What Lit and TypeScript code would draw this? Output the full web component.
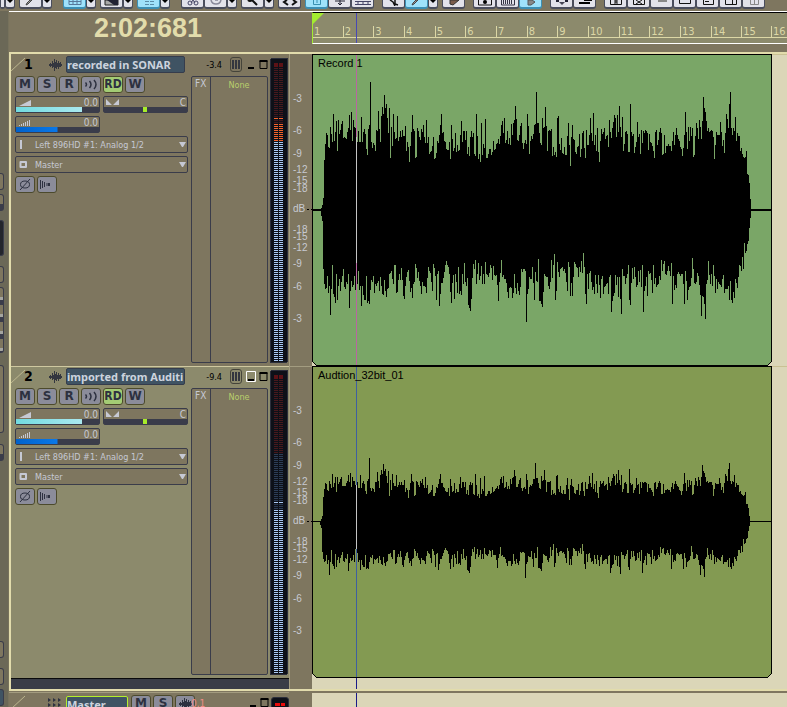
import { LitElement, html, css, svg, nothing } from "lit";
import { customElement, property } from "lit/decorators.js";

// Envelope of the recording, one value per pixel column; 405 is silence.
const SILENCE = 405;
const FIRST = 9;
const UPPER = `400 390 368 255 207 174 180 215 218 157 177 200 117 198 171 138 227 135 177 165 147 138 190 187 190 191 172 159 121 166 112 197 135 157 159 181 200 168 200 200 126 200 170 162 177 222 240 162 150 21 200 218 203 209 228 165 168 108 162 200 123 96 117 60 99 87 129 174 99 250 156 213 117 171 191 189 123 198 186 168 186 165 182 182 153 228 201 216 261 213 170 120 162 167 248 246 159 167 185 195 162 172 150 186 204 135 203 186 236 231 228 213 186 251 249 234 198 204 180 150 117 174 171 198 201 222 225 225 200 252 150 192 228 219 174 231 210 228 225 180 138 201 168 168 195 168 237 216 243 186 168 186 174 237 243 117 182 252 237 261 143 240 207 219 132 249 248 237 222 222 240 231 198 225 222 207 204 192 207 182 150 138 174 129 204 195 168 207 189 210 147 180 144 135 93 132 195 198 180 153 144 204 222 204 195 207 117 153 237 198 183 192 177 150 147 51 144 143 174 204
210 129 159 156 96 153 228 168 165 168 162 243 216 240 231 246 129 123 207 225 189 234 237 216 240 240 183 144 210 272 186 150 192 195 231 237 216 213 177 246 222 174 168 219 248 165 210 210 180 129 174 198 114 210 180 228 159 231 261 198 162 177 171 159 192 183 180 216 135 171 189 159 141 120 129 186 120 171 93 156 186 126 228 207 171 168 177 231 231 87 171 183 177 234 216 201 141 186 177 237 165 204 168 174 165 168 174 225 177 201 204 213 228 248 171 165 210 195 171 159 174 240 237 180 234 213 213 207 213 213 228 198 171 210 180 159 180 192 198 216 222 243 219 180 111 171 222 156 198 156 183 159 246 240 183 144 159 192 135 156 192 138 66 99 111 138 168 159 171 168 165 168 186 251 210 171 180 180 180 141 171 213 195 234 174 117 132 159 87 51 159 180 159 168 126 198 174 183 183 228 219 237 246 249 246 228 297 300 324 372 399`;
const LOWER = `423 438 582 627 642 639 603 654 633 720 642 570 657 666 684 597 675 633 612 648 621 603 582 636 642 621 627 597 699 648 618 636 630 603 645 564 627 588 645 633 693 633 661 675 675 603 684 678 687 645 615 621 603 654 627 633 624 618 648 606 633 657 660 615 648 666 642 639 597 594 588 612 627 570 570 654 651 615 597 615 579 615 663 672 633 606 591 585 618 651 639 669 627 621 567 579 609 591 618 633 657 621 633 633 636 654 609 576 588 594 621 648 567 579 603 675 597 588 693 657 624 624 609 591 570 558 570 576 597 651 684 624 600 672 597 621 654 576 657 648 660 597 627 564 621 633 609 690 699 708 672 609 567 582 555 627 597 564 615 603 573 627 597 627 561 597 600 606 594 570 579 615 573 600 603 600 630 678 621 594 555 606 600 612 612 624 651 669 639 636 639 669 654 597 639 657 624 648 660 636 582 591 582 582 588 741 657 642 606 612 612 576 624 675 591 618 621 552 678
678 687 696 651 597 603 606 606 633 642 621 555 609 570 537 675 648 561 591 606 582 579 576 588 582 594 621 648 561 576 663 624 663 606 561 567 576 579 606 576 591 558 594 534 576 657 687 597 642 594 588 621 645 636 657 600 627 654 600 630 669 612 603 657 636 633 627 624 657 606 600 711 678 663 654 600 630 606 666 606 672 717 582 603 603 627 609 597 570 675 690 624 579 612 576 606 636 630 588 621 585 636 570 711 648 633 606 663 588 597 594 615 654 570 627 609 636 630 627 603 615 555 588 567 558 597 600 588 573 588 603 564 687 603 645 630 639 597 591 597 603 597 597 627 687 588 618 675 645 636 633 609 549 582 624 627 621 594 603 630 660 723 663 666 687 732 627 615 558 600 627 597 633 570 603 654 612 642 621 627 630 636 612 600 654 642 642 642 633 675 618 675 684 651 669 612 624 639 606 570 573 588 546 582 504 534 528 507 498 459 429`;
const nums = (s: string) => s.trim().split(/\s+/).map(Number);
const upper = nums(UPPER).map((v) => SILENCE - v);
const lower = nums(LOWER).map((v) => v - SILENCE);

const MID = 156;
const PLAYHEAD = 44;

function wavePath(level: number, shift: number): string {
  let d = `M${FIRST + shift} ${MID}`;
  const n = Math.min(upper.length, lower.length);
  for (let i = 0; i < n; i++) d += `V${MID - Math.round((upper[i] * level) / 3)}h1`;
  d += `V${MID}`;
  for (let i = n - 1; i >= 0; i--) d += `V${MID + Math.round((lower[i] * level) / 3)}h-1`;
  return d + "Z";
}

interface Track {
  id: number; name: string; peak: string; clip: string; level: number; shift: number;
  selected: boolean; fill: string; cursor: string;
  // meter runs from top to bottom: [css class, first y, last y]
  meter: [string, number, number][];
}

const TRACKS: Track[] = [
  { id: 1, name: "recorded in SONAR", peak: "-3.4", clip: "Record 1", level: 1, shift: 0, selected: false,
    fill: "#7aa667", cursor: "#b966a2",
    meter: [["dimred", 10, 60], ["hot", 60, 61], ["dimred", 62, 66], ["hot", 66, 84], ["on", 84, 303]] },
  { id: 2, name: "imported from Auditi", peak: "-9.4", clip: "Audtion_32bit_01", level: 0.5, shift: -1, selected: true,
    fill: "#839a52", cursor: "#3f5fa0",
    meter: [["dimred", 10, 84], ["dim", 84, 132], ["on", 132, 133], ["dim", 134, 140], ["on", 140, 303]] },
];

const SCALE: [string, number][] = [
  ["-3", 44], ["-6", 76], ["-9", 99], ["-12", 115], ["-15", 126], ["-18", 134], ["dB", 154],
  ["-18", 175], ["-15", 182], ["-12", 193], ["-9", 209], ["-6", 232], ["-3", 264],
];

const waveIcon = svg`<path d="M.5 5v2M1.500 4v4M2.500 5v2M3.500 2v7M4.500 4v4M5.500 0v12M6.500 3v6M7.500 1v9M8.500 4v4M9.500 2v8M10.500 4v4M11.500 3v5M12.500 5v2" stroke="currentColor" fill="none" shape-rendering="crispEdges"/>`;

const controls = css`
  :host { font-family: "DejaVu Sans Condensed", "DejaVu Sans", sans-serif; font-size: 9px; color: #c6c9d4; }
  * { box-sizing: border-box; }
  svg { display: block; flex: none; }
  button, input, select { font: inherit; color: inherit; margin: 0; padding: 0; border: 0; background: none; border-radius: 0; outline: none; }
  .key {
    width: 20px; height: 17px; border: 1px solid #4c4a2c; border-radius: 3px; background: #8b8c9a;
    color: #2d3140; font: bold 12px/15px "DejaVu Sans", sans-serif; text-align: center;
    display: flex; align-items: center; justify-content: center;
  }
  .key.on { background: #a3cc74; font-family: "DejaVu Sans Condensed", sans-serif; }
  .slash { width: 14px; height: 14px; align-self: flex-start; color: #bdb78f; }
  .name {
    height: 17px; border: 1px solid #353c4c; border-radius: 2px; background: #3f5363; color: #ccd3de;
    font: bold 11px/15px "Noto Sans", sans-serif; min-width: 0;
  }
  .winbtn { height: 14px; color: #000; display: flex; align-items: center; }
`;

@customElement("track-header")
class TrackHeader extends LitElement {
  @property({ attribute: false }) track!: Track;

  static styles = [controls, css`
    :host { display: flex; background: #7e765f; min-width: 0; }
    :host([selected]) { background: #8c8a6c; box-shadow: inset 0 1px #cfc8a0; }
    .left { width: 180px; display: flex; flex-direction: column; }
    .right { width: 78px; display: flex; flex-direction: column; padding-bottom: 4px; }
    .title { height: 21px; margin-bottom: 1px; display: flex; align-items: center; }
    .title .slash { margin-top: 3px; }
    .num { width: 24px; color: #000; font: bold 14px/17px "DejaVu Sans Condensed", sans-serif; margin-left: -1px; }
    .wave { color: #33363f; margin: 0 4px 0 1px; }
    .name { width: 119px; }
    .stack { padding-left: 4px; display: flex; flex-direction: column; gap: 3px; }
    .row { display: flex; gap: 2px; }
    .slider { width: 85px; height: 17px; border: 1px solid #3a3c4a; border-radius: 2px; background: #7e765f; margin-right: 1px; }
    .read { display: flex; justify-content: space-between; height: 10px; font-size: 10px; line-height: 11px; padding: 0 1px 0 2px; }
    .slider input { -webkit-appearance: none; appearance: none; display: block; width: 100%; height: 5px; background: #3a3c4a; }
    .slider .gain { background: linear-gradient(90deg, #72dbe0, #aae9ef) 0 0 / 80% 100% no-repeat #3a3c4a; }
    .slider .trim { background: linear-gradient(90deg, #0062cc, #0a78e8) 0 0 / 50% 100% no-repeat #3a3c4a; }
    .slider input::-webkit-slider-thumb { -webkit-appearance: none; width: 4px; height: 5px; background: transparent; }
    .slider .pan::-webkit-slider-thumb { background: #a8ec2a; }
    .pick { width: 173px; height: 17px; border: 1px solid #3a3c4a; border-radius: 2px; background: #7e765f; display: flex; align-items: center; }
    .pick select { -webkit-appearance: none; appearance: none; flex: 1; min-width: 0; height: 15px; }
    .pick .down { margin-right: 1px; }
    .peak { width: 43px; color: #000; text-align: right; padding-right: 8px; }
    .info { display: flex; height: 21px; margin-bottom: 1px; align-items: center; margin-left: -4px; }
    .bars { width: 12px; height: 15px; border: 1px solid #45443a; border-radius: 3px; display: flex; align-items: center; justify-content: center; color: #33363f; }
    .winbtn.min { width: 10px; justify-content: center; margin-left: 4px; }
    .winbtn.max { width: 10px; justify-content: center; margin-left: 2px; }
    .fx { flex: 1; border: 1px solid #3a3c4a; border-radius: 2px; background: #7e765f; display: grid; grid-template-columns: 19px 1fr; width: 77px; }
    .fx .lab { border-right: 1px solid #3a3c4a; padding: 0 0 0 3px; font-size: 10px; line-height: 13px; }
    .fx .none { color: #b9ce6c; text-align: center; line-height: 16px; }
    .meter { margin: 4px 1px; }
    .meter path { fill: none; stroke-width: 4; stroke-dasharray: 1 1; }
    .dimred { stroke: #46191d; } .hot { stroke: #f4622c; } .dim { stroke: #2c3c55; } .on { stroke: #a9c9f5; }
  `];

  private slider(kind: string, icon: unknown, text: string, value: number) {
    return html`<div class="slider">
      <div class="read"><svg width="14" height="10" viewBox="0 0 14 10">${icon}</svg><span>${text}</span></div>
      <input class=${kind} type="range" min="0" max="100" .value=${String(value)} aria-label=${kind} />
    </div>`;
  }

  private pick(icon: unknown, text: string, label: string) {
    return html`<label class="pick"><svg width="19" height="15" viewBox="0 0 19 15">${icon}</svg>
      <select aria-label=${label}><option>${text}</option></select>
      <svg class="down" width="7" height="7" viewBox="0 0 7 7"><path d="M0 1h7L4 6H3z" fill="#c6c9d4"/></svg></label>`;
  }

  render() {
    const t = this.track;
    return html`
      <div class="left">
        <div class="title">
          <svg class="slash" viewBox="0 0 14 14"><path d="M0 14L14 1" stroke="currentColor"/></svg>
          <span class="num">${t.id}</span>
          <svg class="wave" width="13" height="12" viewBox="0 0 13 12">${waveIcon}</svg>
          <input class="name" aria-label="Track name" .value=${t.name} />
        </div>
        <div class="stack">
          <div class="row">
            <button class="key">M</button><button class="key">S</button><button class="key">R</button>
            <button class="key" aria-label="Input echo"><svg width="14" height="11" viewBox="0 0 14 11"><path d="M1.500 3.500q2 2 0 4M5.500 2q3 3.500 0 7M10 1q4 4.500 0 9" fill="none" stroke="currentColor" stroke-width="1.500"/></svg></button>
            <button class="key on">RD</button><button class="key">W</button>
          </div>
          <div class="row">
            ${this.slider("gain", svg`<path d="M1 9L13 3v6z" fill="#c6c9d4"/>`, "0.0", 80)}
            ${this.slider("pan", svg`<path d="M0 2v6h6zM13 2v6H7z" fill="#c6c9d4"/>`, "C", 49)}
          </div>
          <div class="row">
            ${this.slider("trim", svg`<path d="M1.500 9V8M3.500 9V7M5.500 9V6M7.500 9V5M9.500 9V4M11.500 9V3" stroke="#c6c9d4"/>`, "0.0", 50)}
          </div>
          ${this.pick(svg`<path d="M4 3h2v9H4z" fill="#c6c9d4"/>`, "Left 896HD #1: Analog 1/2", "Input")}
          ${this.pick(svg`<path d="M4.500 5h5.500v5H4.500z" fill="none" stroke="#c6c9d4" stroke-width="2" stroke-linejoin="round"/>`, "Master", "Output")}
          <div class="row">
            <button class="key" aria-label="Phase"><svg width="14" height="13" viewBox="0 0 14 13"><ellipse cx="7" cy="6.500" rx="4.500" ry="3.500" fill="none" stroke="currentColor"/><path d="M2 12L12 1" stroke="currentColor"/></svg></button>
            <button class="key" aria-label="Interleave"><svg width="16" height="13" viewBox="0 0 16 13"><path d="M1.500 2v9M3.500 3v7M5.500 4v5M8 5v3" stroke="currentColor"/><path d="M9 5h2v3H9z" fill="currentColor"/></svg></button>
          </div>
        </div>
      </div>
      <div class="right">
        <div class="info">
          <span class="peak">${t.peak}</span>
          <button class="bars" aria-label="Meters"><svg width="8" height="9" viewBox="0 0 8 9"><path d="M1 0v9M4 0v9M7 0v9" stroke="currentColor" stroke-width="2"/></svg></button>
          <button class="winbtn min" aria-label="Minimize"><svg width="10" height="12" viewBox="0 0 10 12">${t.selected ? svg`<path d="M.5 .5h9v10h-9z" fill="none" stroke="#fff"/>` : nothing}<path d="M2 8h6v2H2z"/></svg></button>
          <button class="winbtn max" aria-label="Maximize"><svg width="9" height="12" viewBox="0 0 9 12"><path d="M1 2h7v7.500H1z" fill="none" stroke="#000"/><path d="M.5 1h8v2h-8z"/></svg></button>
        </div>
        <div class="fx"><span class="lab">FX</span><span class="none">None</span></div>
      </div>
      <svg class="meter" width="18" height="305" viewBox="0 0 18 305" shape-rendering="crispEdges">
        <rect width="18" height="305" rx="2" fill="#2b2e3a"/><rect x="1" y="1" width="16" height="303" fill="#0d1018"/>
        <rect x="4" y="5" width="4" height="4" fill="#5c1216"/><rect x="9" y="5" width="4" height="4" fill="#5c1216"/>
        ${t.meter.map(([c, a, b]) => svg`<path class=${c} d="M6 ${a}V${b}M11 ${a}V${b}"/>`)}
      </svg>`;
  }
}

@customElement("audio-clip")
class AudioClip extends LitElement {
  @property({ attribute: false }) track!: Track;
  static styles = css`
    :host { display: block; }
    svg { display: block; }
    text { font: 11px "Liberation Sans", sans-serif; fill: #000; }
  `;
  render() {
    const t = this.track;
    const up = Math.round(73 * t.level), down = Math.round(53 * t.level);
    return html`<svg width="460" height="312" viewBox="0 0 460 312" shape-rendering="crispEdges">
      <path d="M.5 .5h459v307l-4 4H4.500l-4-4z" fill=${t.fill} stroke="#000"/>
      <path d=${`M1 155h458v${t.level === 1 ? 2 : 1}H1z`} />
      <path d=${wavePath(t.level, t.shift)} />
      <rect x=${PLAYHEAD} y="1" width="1" height="310" fill=${t.cursor} />
      <rect x=${PLAYHEAD} y=${MID - up} width="1" height=${up + down} fill="#c4c4c4" />
      <text x="6" y="13">${t.clip}</text>
    </svg>`;
  }
}

// Toolbar icons; the bar is scrolled so that only the lower part of each button shows.
const ICONS: Record<string, unknown> = {
  drop: svg`<path d="M1 0h6L4 3z"/>`,
  pencil: svg`<path d="M9 0L5 4 3 5l1-2 3-3z" stroke="#444" fill="#999"/>`,
  grid: svg`<path d="M2 0v4.500h12V0M2 1.500h12M6 0v4M10 0v4" stroke="#56789a" fill="none"/>`,
  envelope: svg`<path d="M1 0v5h13V0z" fill="#a8a8a8" stroke="#222"/><path d="M3 0l7 5h4V0z" fill="#223"/>`,
  dash: svg`<path d="M4 1.500h4M9 1.500h4M4 4.500h4M9 4.500h4" stroke="#5a8ca8"/>`,
  cut: svg`<path d="M8 0L6 3M8 0l2 3" stroke="#446"/><circle cx="5" cy="3" r="2" fill="none" stroke="#446"/><circle cx="11" cy="3" r="2" fill="none" stroke="#446"/>`,
  loop: svg`<path d="M3 0q1 4 5 4t5-4M7 0h3" stroke="#889" fill="none" stroke-width="1.500"/>`,
  zoom: svg`<path d="M3 0q2 2 4 0l5 5" stroke="#111" fill="none" stroke-width="2"/>`,
  code: svg`<path d="M5 0L2 2l4 3M11 0l3 2-4 3" stroke="#111" fill="none" stroke-width="2"/>`,
  page: svg`<path d="M4.500 0v4.500h7V0M8 0v3" stroke="#388fb0" fill="none"/>`,
  plus: svg`<path d="M3 1h10M8 0v5M6 3l2 2 2-2" stroke="#223" fill="none"/>`,
  rows: svg`<path d="M0 1.500h16M0 4.500h16M3 2v3M8 2v3M13 2v3" stroke="#446"/>`,
  arrow: svg`<path d="M4 0l3 2 2 4M9 0v4l3 1" stroke="#111" fill="none" stroke-width="1.500"/>`,
  brush: svg`<path d="M4 0v4l3 1 6-5z" fill="#7a5c4c" stroke="#333"/>`,
  film: svg`<path d="M1.500 0v5h13V0" stroke="#111" fill="none"/><circle cx="8" cy="2" r="2"/>`,
  keys: svg`<path d="M1.500 0v5h13V0M3.500 0v4M5.500 0v4M7.500 0v4M9.500 0v4M11.500 0v4" stroke="#334" fill="none"/>`,
  play: svg`<path d="M5 0h4l3 2-4 3H5z" fill="#888" stroke="#555"/>`,
  move: svg`<path d="M2 1h3M11 1h3" stroke="#223" stroke-width="2"/><path d="M5 2h6L8 5z" fill="#445"/>`,
  lines: svg`<path d="M7 0h8M2 3h11" stroke="#000" stroke-width="2"/>`,
  boxa: svg`<path d="M2.500 0v4.500h11V0M8 0v3M6 1h4M6 3h4" stroke="#111" fill="none"/>`,
  boxx: svg`<path d="M2.500 0v4.500h11V0M5 0l6 4M11 0L5 4" stroke="#111" fill="none"/>`,
  minus: svg`<path d="M4 0h9v2H4z" fill="#888"/>`,
  box: svg`<path d="M2.500 0v3.500h11V0" stroke="#111" fill="none"/>`,
  boxl: svg`<path d="M3.500 0v4.500h10V0M5 1.500h4" stroke="#111" fill="none"/>`,
  boxr: svg`<path d="M2.500 0v4.500h11V0M9.500 4V0" stroke="#111" fill="none"/>`,
  ghost: svg`<path d="M4.500 0v4.500h8V0M8.500 0v4" stroke="#888" fill="none"/>`,
};
// [space before, buttons]; a leading "+" marks a pressed button
const GROUPS: [string, string[]][] = [
  ["", ["part", "drop"]], ["s", ["pencil", "drop"]], ["l", ["+grid", "drop"]], ["s", ["envelope", "drop"]],
  ["s", ["+dash", "drop"]], ["l", ["cut", "loop", "drop"]], ["s", ["zoom", "drop"]], ["s", ["code"]],
  ["s", ["+page", "plus", "rows"]], ["m", ["arrow", "+pencil", "drop"]], ["s", ["brush"]],
  ["m", ["film", "keys", "+play"]], ["m", ["move", "lines"]],
  ["m", ["boxa", "boxx", "minus", "box", "boxl", "boxr", "ghost"]],
];

@customElement("tool-bar")
class ToolBar extends LitElement {
  static styles = css`
    :host { display: flex; height: 11px; background: #7e765f; overflow: hidden; }
    .s { margin-left: 4px; } .m { margin-left: 8px; } .l { margin-left: 11px; }
    .group { display: flex; flex: none; }
    button { box-sizing: border-box; width: 23px; height: 9px; padding: 0; margin: 0; border: 1px solid #4a4d5c; border-top: 0; border-bottom-width: 2px; border-radius: 0 0 3px 3px; background: #e2e2ea; display: flex; justify-content: center; align-items: flex-start; }
    .on { background: #9fe2fb; border-color: #3d8fb4; }
    .drop { width: 10px; } .part { width: 5px; }
    svg { display: block; flex: none; }
  `;
  render() {
    return GROUPS.map(([gap, items]) => html`<div class="group ${gap}">${items.map((raw) => {
      const on = raw.startsWith("+");
      const id = on ? raw.slice(1) : raw;
      const w = id === "drop" ? 8 : 16;
      return html`<button class="${id} ${on ? "on" : ""}" aria-label=${id}>${id === "part" ? nothing
        : html`<svg width=${w} height="6" viewBox="0 0 ${w} 6">${ICONS[id]}</svg>`}</button>`;
    })}</div>`);
  }
}

@customElement("side-rail")
class SideRail extends LitElement {
  static styles = css`
    :host { display: block; width: 9px; background: #6b6857; padding-top: 162px; border-right: 1px solid #77725c; box-sizing: border-box; }
    div { width: 4px; box-sizing: border-box; border: 1px solid #3a3c4a; border-left: 0; border-radius: 0 3px 3px 0; background: #7e765f; margin-bottom: 4px; height: 17px; }
    .half { background: linear-gradient(#7e765f 60%, #3a3c4a 60%); }
    .dark { background: #23252c; height: 36px; margin: 9px 0 10px; }
    .tall { height: 66px; background: repeating-linear-gradient(#7e765f 0 9px, #a5a5a0 9px 12px, #3a3c4a 12px 17px); margin-bottom: 12px; }
    .open { height: 68px; margin-bottom: 11px; }
    .low { margin-top: 180px; margin-bottom: 10px; }
    .blue { background: #3f5363; }
  `;
  render() {
    return html`<div></div><div class="half"></div><div class="dark"></div><div></div><div class="tall"></div>
      <div class="open"></div><div class="half"></div><div class="low"></div><div></div><div class="blue"></div><div></div>`;
  }
}

@customElement("app-root")
class AppRoot extends LitElement {
  static styles = [controls, css`
    :host { display: flex; flex-direction: column; height: 100vh; overflow: hidden; background: #7e765f; }
    .body { flex: 1; display: flex; min-height: 0; }
    .main { flex: 1; min-width: 0; border-top: 1px solid #fff; }
    .head { display: grid; grid-template-columns: 303px 1fr; height: 40px; }
    .time { color: #e2dcab; font: bold 27px/33px "Liberation Sans", sans-serif; padding-left: 85px; }
    .ruler { position: relative; height: 32px; background: #8c8a6c; border-top: 1px solid #000; border-bottom: 1px solid #fff; border-left: 1px solid #a4ec30; display: flex; overflow: hidden; color: #dcd7a6; padding-top: 13px; }
    .ruler .flag { position: absolute; left: 0; top: 0; }
    .bars { width: 460px; flex: none; display: grid; grid-template-columns: repeat(15, 1fr); margin-left: -1px; }
    .bar { height: 12px; border-left: 1px solid #dcd7a6; border-bottom: 1px solid #dcd7a6; padding-left: 1px; font: 11px/11px "DejaVu Sans Condensed", sans-serif; }
    .bar.first { border-left-color: transparent; }
    .bar.last { flex: 1; margin-left: -1px; }
    .cursor { position: absolute; left: 43px; top: 0; width: 1px; height: 30px; background: #4848b4; }
    .tracks { border: 2px solid #e2dcac; border-right: 0; }
    .track { display: grid; grid-template-columns: 278px 23px 1fr; height: 312px; }
    .scale { background: #7e765f; border-left: 1px solid #a39c80; }
    .track + .track .scale { box-shadow: inset 0 1px #a39c80; }
    .scale text { font: 10px "Liberation Sans", sans-serif; fill: #c8cad2; }
    .lane { background: #dbd6b8; overflow: hidden; box-shadow: inset 0 1px #c9c193; }
    .foot { display: grid; grid-template-columns: 278px 23px 1fr; height: 11px; }
    .foot .shelf { background: #3a3d47; border-top: 1px solid #0a0a0c; }
    .foot .gap { border-left: 1px solid #a39c80; }
    .foot .space, .bus .space { background: #dbd6b8; padding-left: 44px; }
    .navy { width: 1px; height: 100%; background: #1a1a88; }
    .bus { display: grid; grid-template-columns: 280px 23px 1fr; margin-top: 1px; }
    .strip { height: 24px; border-top: 1px solid #a39c80; padding: 2px 0 0 2px; display: flex; overflow: hidden; align-items: flex-start; }
    .bus .space { margin-top: 1px; }
    .strip .grip { margin: 3px 4px 0 23px; color: #2d3140; }
    .strip .name { width: 62px; border: 1px solid #b4f02c; margin-top: 1px; }
    .keys { display: flex; gap: 2px; margin-left: 3px; }
    .clipped { color: #f08c84; width: 55px; margin-left: -4px; font: 10px/17px "DejaVu Sans Condensed", sans-serif; }
    .strip .winbtn { width: 10px; margin: 1px 0 0 2px; }
    .led { width: 18px; height: 20px; margin: 2px 0 0 1px; background: #0d1018; border: 1px solid #2b2e3a; border-radius: 3px; padding: 5px 3px; display: flex; gap: 1px; }
    .led i { flex: 1; height: 3px; background: #e80c0c; }
  `];

  render() {
    return html`
      <tool-bar></tool-bar>
      <div class="body">
        <side-rail></side-rail>
        <div class="main">
          <div class="head">
            <div class="time">2:02:681</div>
            <div class="ruler">
              <svg class="flag" width="11" height="11" viewBox="0 0 11 11"><path d="M0 0h11L0 11z" fill="#a4ec30"/></svg>
              <div class="bars">${Array.from({ length: 15 }, (_, i) => html`<div class="bar ${i ? "" : "first"}">${i + 1}</div>`)}</div>
              <div class="bar last">16</div>
              <div class="cursor"></div>
            </div>
          </div>
          <div class="tracks">
            ${TRACKS.map((t) => html`<div class="track">
              <track-header .track=${t} ?selected=${t.selected}></track-header>
              <div class="scale"><svg width="22" height="300" viewBox="0 0 22 300">
                ${SCALE.map(([label, y]) => svg`<text x="3" y=${y + 4}>${label}</text>`)}
                <path d="M17 155.500h2M21 155.500h1" stroke="#000"/></svg></div>
              <div class="lane"><audio-clip .track=${t}></audio-clip></div>
            </div>`)}
            <div class="foot"><div class="shelf"></div><div class="gap"></div><div class="space"><div class="navy"></div></div></div>
          </div>
          <div class="bus">
            <div class="strip">
              <svg class="slash" viewBox="0 0 14 14"><path d="M0 14L14 1" stroke="currentColor"/></svg>
              <svg class="grip" width="14" height="14" viewBox="0 0 14 14"><path d="M0 0l3 2-3 2zM5 0l3 2-3 2zM10 0l3 2-3 2zM0 5l3 2-3 2zM5 5l3 2-3 2zM10 5l3 2-3 2zM0 10l3 2-3 2zM5 10l3 2-3 2zM10 10l3 2-3 2z" fill="currentColor"/></svg>
              <input class="name" aria-label="Bus name" .value=${"Master"} />
              <div class="keys"><button class="key">M</button><button class="key">S</button>
                <button class="key" aria-label="Waveform"><svg width="13" height="12" viewBox="0 0 13 12">${waveIcon}</svg></button></div>
              <span class="clipped">0.1</span>
              <button class="winbtn" aria-label="Minimize"><svg width="10" height="12" viewBox="0 0 10 12"><path d="M2 8h6v2H2z"/></svg></button>
              <button class="winbtn" aria-label="Maximize"><svg width="9" height="12" viewBox="0 0 9 12"><path d="M1 2h7v7.500H1z" fill="none" stroke="#000"/><path d="M.5 1h8v2h-8z"/></svg></button>
              <div class="led"><i></i><i></i></div>
            </div>
            <div></div>
            <div class="space"><div class="navy"></div></div>
          </div>
        </div>
      </div>`;
  }
}
